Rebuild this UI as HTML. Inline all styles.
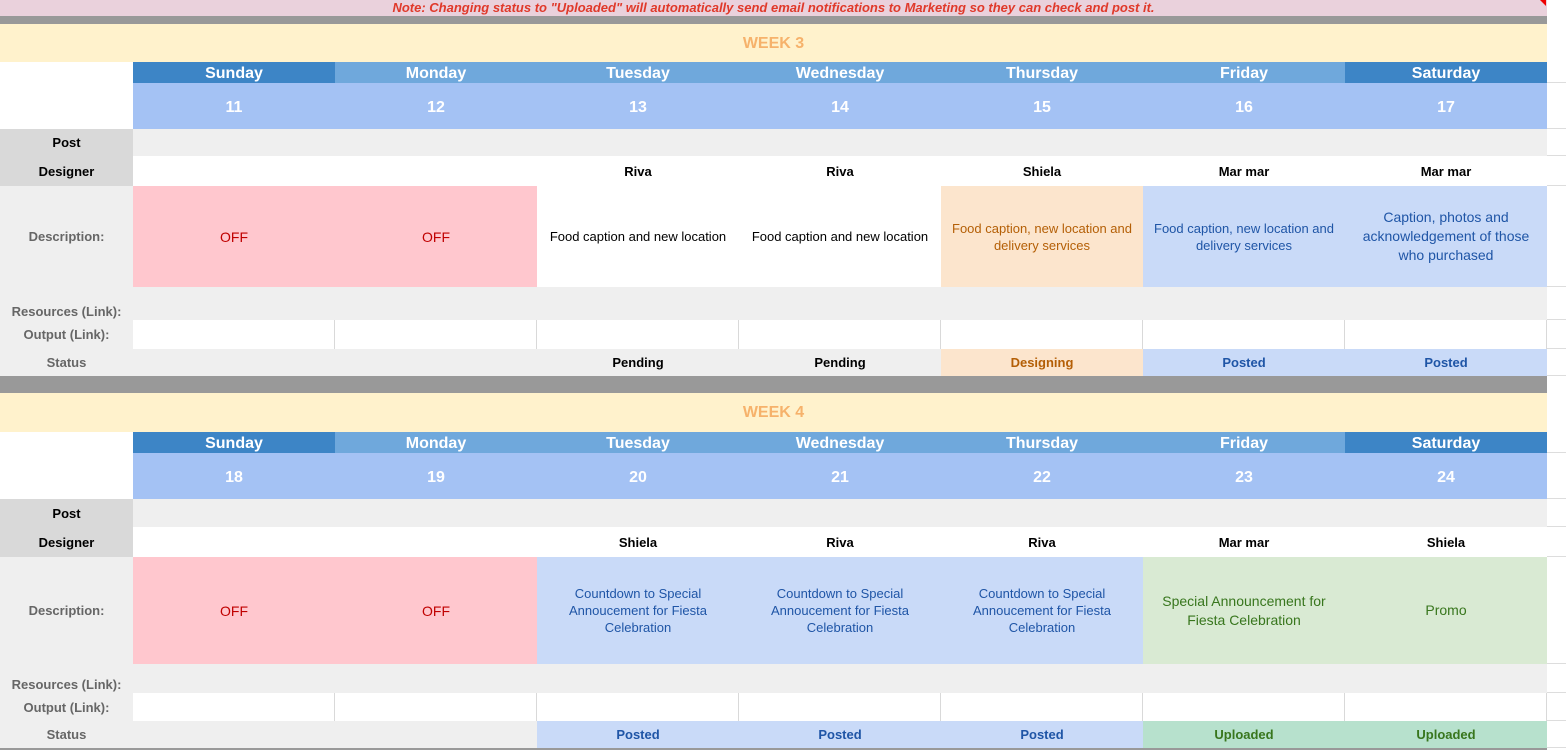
<!DOCTYPE html>
<html><head><meta charset="utf-8"><style>
*{margin:0;padding:0;box-sizing:border-box}
body{width:1566px;height:750px;overflow:hidden;background:#fff;font-family:"Liberation Sans",Arial,sans-serif;position:relative}
.note{position:absolute;left:0;top:0;width:1547px;height:16px;background:#ead1dc;color:#e0392a;font:italic bold 13px "Liberation Sans",sans-serif;text-align:center;line-height:15px}
.bar{position:absolute;left:0;width:1547px;background:#999}
.wk{position:absolute;left:0;width:1547px;background:#fff2cc;color:#f6b26b;font-weight:bold;font-size:16px;text-align:center}
.g{position:absolute;left:0;display:grid;grid-template-columns:133px repeat(7,202px) 19px}
.g div{display:flex;align-items:center;justify-content:center;text-align:center}
.dh{color:#fff;font-weight:bold;font-size:16px;background:#6fa8dc;padding-top:3px}
.dh.d{background:#3d85c6}
.dt{color:#fff;font-weight:bold;font-size:16px;background:#a4c2f4;padding-top:4px}
.lb{background:#efefef;color:#666;font-weight:bold;font-size:13px}
.lb2{background:#d9d9d9;color:#000;font-weight:bold;font-size:13px}
.e{background:#efefef}
.w{background:#fff}
.o{background:#fff;border-right:1px solid #d9d9d9}
.nm{font-weight:bold;font-size:13px;color:#000}
.off{background:#ffc7ce;color:#c00000;font-size:14px}
.pe{background:#fce5cd;color:#b45f06;font-size:13px;line-height:17px;padding:0 8px}
.bl{background:#c9daf8;color:#1f55a6;font-size:13px;line-height:17px;padding:0 8px}
.gr{background:#d9ead3;color:#38761d;font-size:14px;line-height:19px;padding:0 8px}
.sb{font-weight:bold;font-size:13px}
.gut{background:#fff;border-bottom:1px solid #ddd}
</style></head><body>
<div class="note">Note: Changing status to "Uploaded" will automatically send email notifications to Marketing so they can check and post it.</div>
<div style="position:absolute;left:1540px;top:0;width:0;height:0;border-left:6px solid transparent;border-top:6px solid #e00"></div>
<div class="bar" style="top:16px;height:8px"></div>
<div class="wk" style="top:24px;height:38px;line-height:40px">WEEK 3</div>

<div class="g" style="top:62px;grid-template-rows:21px 46px 27px 30px 101px 33px 29px 27px">
<div class="w" style="grid-row:span 2"></div>
<div class="dh d">Sunday</div><div class="dh">Monday</div><div class="dh">Tuesday</div><div class="dh">Wednesday</div><div class="dh">Thursday</div><div class="dh">Friday</div><div class="dh d">Saturday</div><div class="gut"></div>
<div class="dt">11</div><div class="dt">12</div><div class="dt">13</div><div class="dt">14</div><div class="dt">15</div><div class="dt">16</div><div class="dt">17</div><div class="gut"></div>
<div class="lb2">Post</div><div class="e" style="grid-column:span 7"></div><div class="gut"></div>
<div class="lb2">Designer</div><div class="w"></div><div class="w"></div><div class="w nm">Riva</div><div class="w nm">Riva</div><div class="w nm">Shiela</div><div class="w nm">Mar mar</div><div class="w nm">Mar mar</div><div class="gut"></div>
<div class="lb">Description:</div><div class="off">OFF</div><div class="off">OFF</div><div class="w" style="font-size:13px">Food caption and new location</div><div class="w" style="font-size:13px">Food caption and new location</div><div class="pe">Food caption, new location and delivery services</div><div class="bl">Food caption, new location and delivery services</div><div class="bl" style="font-size:14px;line-height:19px">Caption, photos and acknowledgement of those who purchased</div><div class="gut"></div>
<div class="lb" style="align-items:flex-end;padding-bottom:1px">Resources (Link):</div><div class="e" style="grid-column:span 7"></div><div class="gut"></div>
<div class="lb">Output (Link):</div><div class="o"></div><div class="o"></div><div class="o"></div><div class="o"></div><div class="o"></div><div class="o"></div><div class="o"></div><div class="gut"></div>
<div class="lb">Status</div><div class="e"></div><div class="e"></div><div class="e sb">Pending</div><div class="e sb">Pending</div><div class="sb" style="background:#fce5cd;color:#b45f06">Designing</div><div class="sb" style="background:#c9daf8;color:#1f55a6">Posted</div><div class="sb" style="background:#c9daf8;color:#1f55a6">Posted</div><div class="gut"></div>
</div>

<div class="bar" style="top:376px;height:17px"></div>
<div class="wk" style="top:393px;height:39px;line-height:39px">WEEK 4</div>

<div class="g" style="top:432px;grid-template-rows:21px 46px 28px 30px 107px 29px 28px 27px">
<div class="w" style="grid-row:span 2"></div>
<div class="dh d">Sunday</div><div class="dh">Monday</div><div class="dh">Tuesday</div><div class="dh">Wednesday</div><div class="dh">Thursday</div><div class="dh">Friday</div><div class="dh d">Saturday</div><div class="gut"></div>
<div class="dt">18</div><div class="dt">19</div><div class="dt">20</div><div class="dt">21</div><div class="dt">22</div><div class="dt">23</div><div class="dt">24</div><div class="gut"></div>
<div class="lb2">Post</div><div class="e" style="grid-column:span 7"></div><div class="gut"></div>
<div class="lb2">Designer</div><div class="w"></div><div class="w"></div><div class="w nm">Shiela</div><div class="w nm">Riva</div><div class="w nm">Riva</div><div class="w nm">Mar mar</div><div class="w nm">Shiela</div><div class="gut"></div>
<div class="lb">Description:</div><div class="off">OFF</div><div class="off">OFF</div><div class="bl">Countdown to Special Annoucement for Fiesta Celebration</div><div class="bl">Countdown to Special Annoucement for Fiesta Celebration</div><div class="bl">Countdown to Special Annoucement for Fiesta Celebration</div><div class="gr">Special Announcement for Fiesta Celebration</div><div class="gr">Promo</div><div class="gut"></div>
<div class="lb" style="align-items:flex-end;padding-bottom:1px">Resources (Link):</div><div class="e" style="grid-column:span 7"></div><div class="gut"></div>
<div class="lb">Output (Link):</div><div class="o"></div><div class="o"></div><div class="o"></div><div class="o"></div><div class="o"></div><div class="o"></div><div class="o"></div><div class="gut"></div>
<div class="lb">Status</div><div class="e"></div><div class="e"></div><div class="sb" style="background:#c9daf8;color:#1f55a6">Posted</div><div class="sb" style="background:#c9daf8;color:#1f55a6">Posted</div><div class="sb" style="background:#c9daf8;color:#1f55a6">Posted</div><div class="sb" style="background:#b7e1cd;color:#38761d">Uploaded</div><div class="sb" style="background:#b7e1cd;color:#38761d">Uploaded</div><div class="gut"></div>
</div>
<div class="bar" style="top:748px;height:2px"></div>
</body></html>
